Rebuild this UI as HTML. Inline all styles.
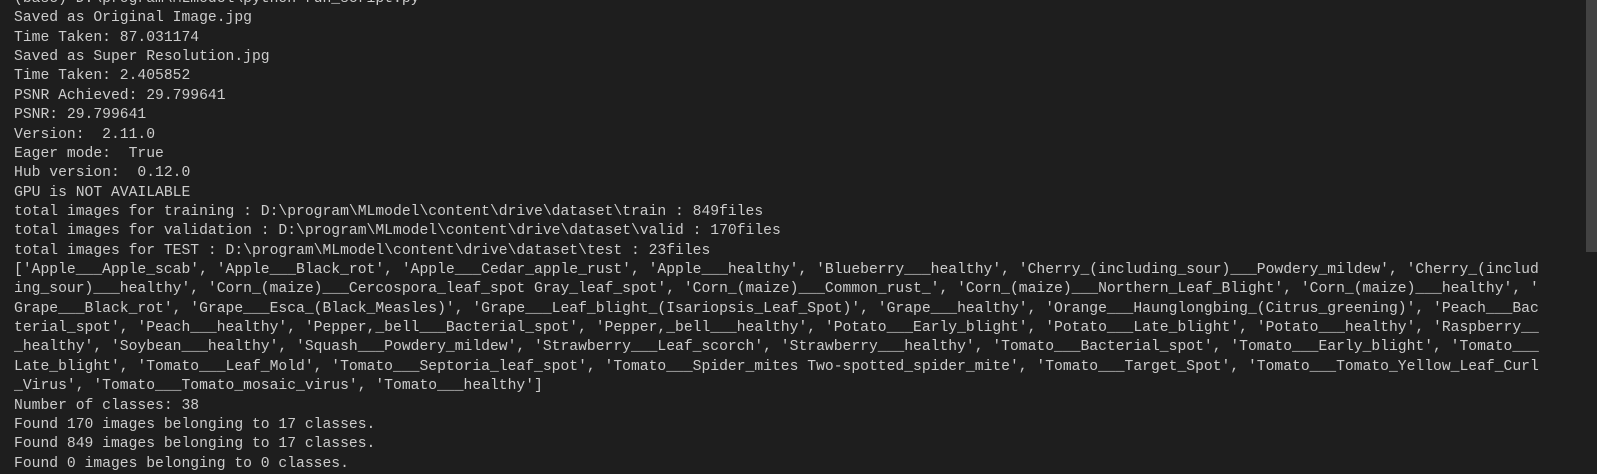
<!DOCTYPE html>
<html><head><meta charset="utf-8"><style>
html,body{margin:0;padding:0;background:#1e1e1e;width:1597px;height:471px;overflow:hidden}
#t{position:absolute;left:14px;top:-10px;font-family:"Liberation Mono",monospace;font-size:14.7px;line-height:19.36px;color:#cccccc;white-space:pre;margin:0}
#sb{position:absolute;left:1586px;top:0;width:11px;height:252px;background:#424242}
</style></head><body>
<div id="t">(base) D:\program\MLmodel\python run_script.py
Saved as Original Image.jpg
Time Taken: 87.031174
Saved as Super Resolution.jpg
Time Taken: 2.405852
PSNR Achieved: 29.799641
PSNR: 29.799641
Version:  2.11.0
Eager mode:  True
Hub version:  0.12.0
GPU is NOT AVAILABLE
total images for training : D:\program\MLmodel\content\drive\dataset\train : 849files
total images for validation : D:\program\MLmodel\content\drive\dataset\valid : 170files
total images for TEST : D:\program\MLmodel\content\drive\dataset\test : 23files
['Apple___Apple_scab', 'Apple___Black_rot', 'Apple___Cedar_apple_rust', 'Apple___healthy', 'Blueberry___healthy', 'Cherry_(including_sour)___Powdery_mildew', 'Cherry_(includ
ing_sour)___healthy', 'Corn_(maize)___Cercospora_leaf_spot Gray_leaf_spot', 'Corn_(maize)___Common_rust_', 'Corn_(maize)___Northern_Leaf_Blight', 'Corn_(maize)___healthy', '
Grape___Black_rot', 'Grape___Esca_(Black_Measles)', 'Grape___Leaf_blight_(Isariopsis_Leaf_Spot)', 'Grape___healthy', 'Orange___Haunglongbing_(Citrus_greening)', 'Peach___Bac
terial_spot', 'Peach___healthy', 'Pepper,_bell___Bacterial_spot', 'Pepper,_bell___healthy', 'Potato___Early_blight', 'Potato___Late_blight', 'Potato___healthy', 'Raspberry__
_healthy', 'Soybean___healthy', 'Squash___Powdery_mildew', 'Strawberry___Leaf_scorch', 'Strawberry___healthy', 'Tomato___Bacterial_spot', 'Tomato___Early_blight', 'Tomato___
Late_blight', 'Tomato___Leaf_Mold', 'Tomato___Septoria_leaf_spot', 'Tomato___Spider_mites Two-spotted_spider_mite', 'Tomato___Target_Spot', 'Tomato___Tomato_Yellow_Leaf_Curl
_Virus', 'Tomato___Tomato_mosaic_virus', 'Tomato___healthy']
Number of classes: 38
Found 170 images belonging to 17 classes.
Found 849 images belonging to 17 classes.
Found 0 images belonging to 0 classes.</div>
<div id="sb"></div>
</body></html>
